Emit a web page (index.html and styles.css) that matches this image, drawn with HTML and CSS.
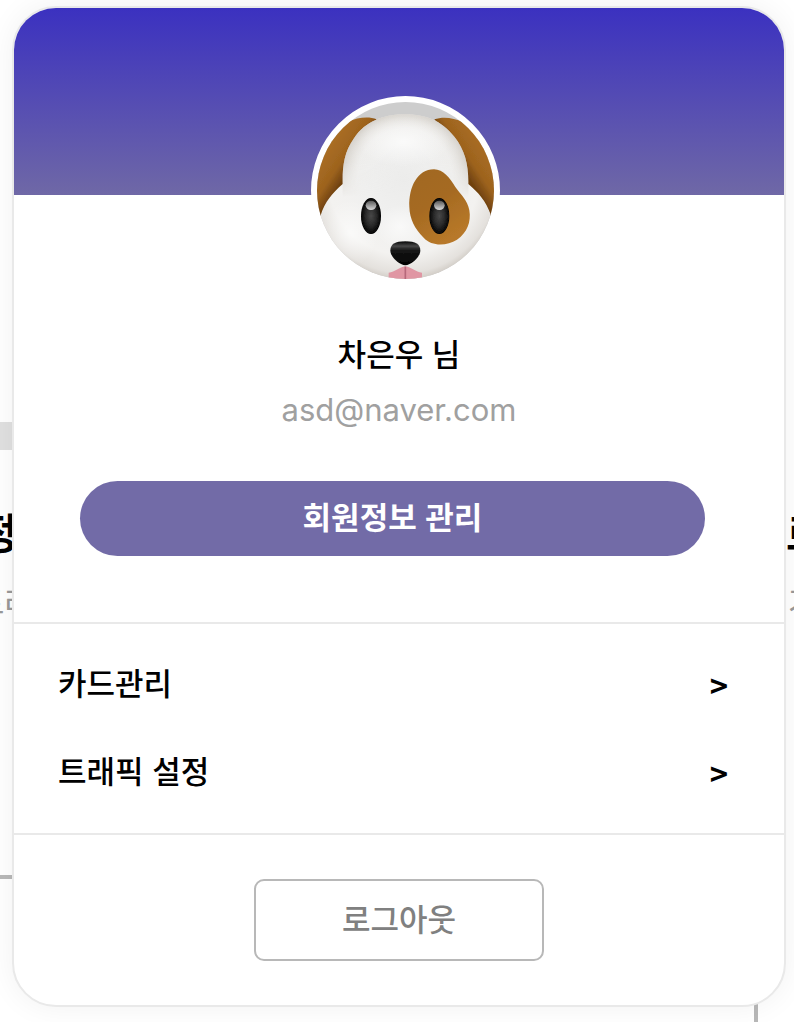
FILE: index.html
```html
<!DOCTYPE html>
<html lang="ko">
<head>
<meta charset="utf-8">
<meta name="viewport" content="width=device-width, initial-scale=1">
<title>프로필</title>
<link rel="stylesheet" href="styles.css">
</head>
<body>
<div class="backdrop" aria-hidden="true">
  <div class="backdrop-left">
    <div class="chip"></div>
    <div class="backdrop-title">정</div>
    <div class="backdrop-note">트래</div>
    <div class="rule"></div>
  </div>
  <div class="backdrop-right">
    <div class="backdrop-title">로</div>
    <div class="backdrop-note">가</div>
    <div class="post"></div>
  </div>
</div>
<main class="card">
  <div class="banner"></div>
  <section class="profile">
    <div class="avatar">
      <svg viewBox="51 36 531 531" role="img" aria-label="강아지">
        <defs>
          <radialGradient id="head" gradientUnits="userSpaceOnUse" cx="310" cy="270" r="320">
            <stop offset="0" stop-color="#ececeb"/><stop offset=".35" stop-color="#f0f0ef"/><stop offset=".7" stop-color="#f3f2f0"/><stop offset=".87" stop-color="#e4e1dd"/><stop offset="1" stop-color="#beb7ae"/>
          </radialGradient>
          <radialGradient id="crown" gradientUnits="userSpaceOnUse" cx="315" cy="255" r="200">
            <stop offset="0" stop-color="#fff" stop-opacity="0"/><stop offset=".7" stop-color="#ddd9d3" stop-opacity=".1"/><stop offset="1" stop-color="#bfb9b0" stop-opacity=".75"/>
          </radialGradient>
          <radialGradient id="shine"><stop offset="0" stop-color="#fff"/><stop offset="1" stop-color="#fff" stop-opacity="0"/></radialGradient>
          <linearGradient id="fade" x1="0" y1="0" x2="0" y2="1"><stop offset=".6" stop-color="#fff"/><stop offset="1" stop-color="#000"/></linearGradient>
          <mask id="crownMask"><rect x="100" y="60" width="430" height="260" fill="url(#fade)"/></mask>
          <linearGradient id="earLeft" gradientUnits="userSpaceOnUse" x1="75" y1="190" x2="150" y2="240"><stop offset="0" stop-color="#a96d23"/><stop offset=".6" stop-color="#9d631e"/><stop offset="1" stop-color="#6f410f"/></linearGradient>
          <linearGradient id="earRight" gradientUnits="userSpaceOnUse" x1="560" y1="180" x2="482" y2="232"><stop offset="0" stop-color="#a96d23"/><stop offset=".6" stop-color="#9d631e"/><stop offset="1" stop-color="#6f410f"/></linearGradient>
          <linearGradient id="patch" x1="0" y1="0" x2=".5" y2="1"><stop offset="0" stop-color="#a1681f"/><stop offset=".5" stop-color="#a56a22"/><stop offset="1" stop-color="#b77829"/></linearGradient>
          <radialGradient id="eye"><stop offset="0" stop-color="#484848"/><stop offset=".55" stop-color="#292929"/><stop offset="1" stop-color="#020202"/></radialGradient>
          <linearGradient id="glint" x1="0" y1="0" x2="0" y2="1"><stop offset="0" stop-color="#555"/><stop offset="1" stop-color="#dadada"/></linearGradient>
          <linearGradient id="nose" x1="0" y1="0" x2="0" y2="1"><stop offset="0" stop-color="#080808"/><stop offset=".2" stop-color="#484848"/><stop offset=".38" stop-color="#151515"/><stop offset="1" stop-color="#020202"/></linearGradient>
          <filter id="soft" x="-20%" y="-20%" width="140%" height="140%"><feGaussianBlur stdDeviation="2"/></filter>
        </defs>
        <rect x="51" y="36" width="531" height="531" fill="#cdcdcd"/>
        <g filter="url(#soft)">
          <path d="M230 88C190 73 130 92 95 130C55 180 40 230 40 330L62 378L130 290L150 180Z" fill="url(#earLeft)"/>
          <path d="M403 88C445 73 500 92 545 135C585 185 600 240 596 330L573 378L502 290L485 180Z" fill="url(#earRight)"/>
        </g>
        <path d="M315 73C250 73 196 94 162 145C132 187 127 230 128 282C98 309 74 335 62 376C62 490 165 590 316 590C468 590 571 490 573 376C558 332 535 308 505 282C506 225 495 180 463 140C423 91 377 73 315 73Z" fill="url(#head)"/>
        <path mask="url(#crownMask)" d="M315 73C250 73 196 94 162 145C132 187 127 230 128 282V320H505V282C506 225 495 180 463 140C423 91 377 73 315 73Z" fill="url(#crown)"/>
        <ellipse cx="310" cy="155" rx="140" ry="75" fill="url(#shine)" opacity=".7"/>
        <ellipse cx="150" cy="430" rx="85" ry="100" fill="url(#shine)" opacity=".6"/>
        <ellipse cx="300" cy="410" rx="75" ry="65" fill="url(#shine)" opacity=".6"/>
        <path d="M402 238C352 238 326 292 328 350C329 387 344 416 371 443C396 470 440 468 471 449C501 429 514 396 508 361C503 330 482 314 466 291C449 264 430 238 402 238Z" fill="url(#patch)" filter="url(#soft)"/>
        <g filter="url(#soft)">
          <ellipse cx="213" cy="378" rx="30" ry="54" fill="url(#eye)"/>
          <ellipse cx="418" cy="378" rx="30" ry="54" fill="url(#eye)"/>
          <ellipse cx="213" cy="346" rx="16" ry="14" fill="url(#glint)"/>
          <ellipse cx="418" cy="346" rx="16" ry="14" fill="url(#glint)"/>
          <path d="M266 548C285 547 298 531 316 529C334 531 347 547 366 548V590H266Z" fill="#e096a3"/>
          <path d="M316 530V570" stroke="#b7687a" stroke-width="5"/>
          <path d="M316 454C285 454 271 463 271 482C271 501 300 526 316 526C332 526 361 501 361 482C361 463 347 454 316 454Z" fill="url(#nose)"/>
        </g>
      </svg>
    </div>
    <h1 class="name">차은우 님</h1>
    <p class="email">asd@naver.com</p>
    <button class="manage" type="button">회원정보 관리</button>
  </section>
  <nav class="menu">
    <a class="menu-item" href="#cards"><span>카드관리</span><span class="arrow">&gt;</span></a>
    <a class="menu-item" href="#traffic"><span>트래픽 설정</span><span class="arrow">&gt;</span></a>
  </nav>
  <footer class="actions">
    <button class="logout" type="button">로그아웃</button>
  </footer>
</main>
</body>
</html>
```
FILE: styles.css
```css
* { box-sizing: border-box; }

body {
  margin: 0;
  position: relative;
  min-height: 100vh;
  padding: 6px 8px 15px 12px;
  background: #fff;
  color: #000;
  font-family: "Noto Sans CJK KR", sans-serif;
  overflow-x: hidden;
}

.backdrop {
  position: absolute;
  inset: 0;
  display: flex;
  justify-content: space-between;
  overflow: hidden;
}

.backdrop-left {
  width: 14px;
  padding-top: 422px;
  display: flex;
  flex-direction: column;
  align-items: flex-end;
}

.backdrop-right {
  width: 40px;
  padding-top: 502px;
  display: flex;
  flex-direction: column;
}

.chip { width: 14px; height: 28px; background: #e0e0e0; }
.backdrop-title { font-size: 42px; line-height: 60px; font-weight: 700; }
.backdrop-note { font-size: 32px; line-height: 40px; color: #999; white-space: nowrap; }
.backdrop-left .backdrop-title { margin: 51px -4px 0 0; }
.backdrop-left .backdrop-note { margin: 19px -20px 0 0; }
.backdrop-right .backdrop-title { padding-left: 32px; }
.backdrop-right .backdrop-note { padding-left: 34px; margin-top: 18px; }
.rule { width: 14px; height: 4px; margin-top: 255px; background: #b8b8b8; }
.post { width: 4px; flex: 1; margin-top: 340px; background: #b8b8b8; }

.card {
  position: relative;
  border: 2px solid #e9e9e9;
  border-radius: 44px;
  background: #fff;
  box-shadow: 0 0 30px rgba(0, 0, 0, 0.06);
  overflow: hidden;
}

.banner { height: 187px; background: linear-gradient(#3b31c0, #6f68a6); }

.profile {
  display: flex;
  flex-direction: column;
  align-items: center;
  padding-bottom: 66px;
}

.avatar {
  width: 189px;
  height: 189px;
  margin: -99px 0 0 13px;
  border: 6px solid #fff;
  border-radius: 50%;
  background: #fff;
}

.avatar svg { display: block; width: 100%; height: 100%; border-radius: 50%; }

.name { margin: 44px 0 0; font-size: 31px; line-height: 48px; font-weight: 500; }

.email {
  margin: 13px 0 0;
  color: #a0a0a0;
  font-family: Inter, "Noto Sans CJK KR", sans-serif;
  font-size: 31px;
  line-height: 40px;
}

.manage {
  align-self: stretch;
  height: 75px;
  margin: 51px 79px 0 66px;
  padding: 0 0 6px;
  border: 0;
  border-radius: 38px;
  background: #726ba7;
  color: #fff;
  font: 700 31px/40px "Noto Sans CJK KR", sans-serif;
}

.menu { border: solid #e9e9e9; border-width: 2px 0; padding: 14px 56px 19px 44px; }

.menu-item {
  display: flex;
  align-items: center;
  justify-content: space-between;
  height: 88px;
  color: inherit;
  font-size: 31px;
  line-height: 48px;
  font-weight: 500;
  text-decoration: none;
}

.arrow { padding-top: 6px; font-weight: 700; }

.actions { display: flex; justify-content: center; padding: 44px 0; }

.logout {
  width: 290px;
  height: 82px;
  padding: 0 0 4px;
  border: 2px solid #b8b8b8;
  border-radius: 10px;
  background: #fff;
  color: #808080;
  font: 500 31px/48px "Noto Sans CJK KR", sans-serif;
}
```
